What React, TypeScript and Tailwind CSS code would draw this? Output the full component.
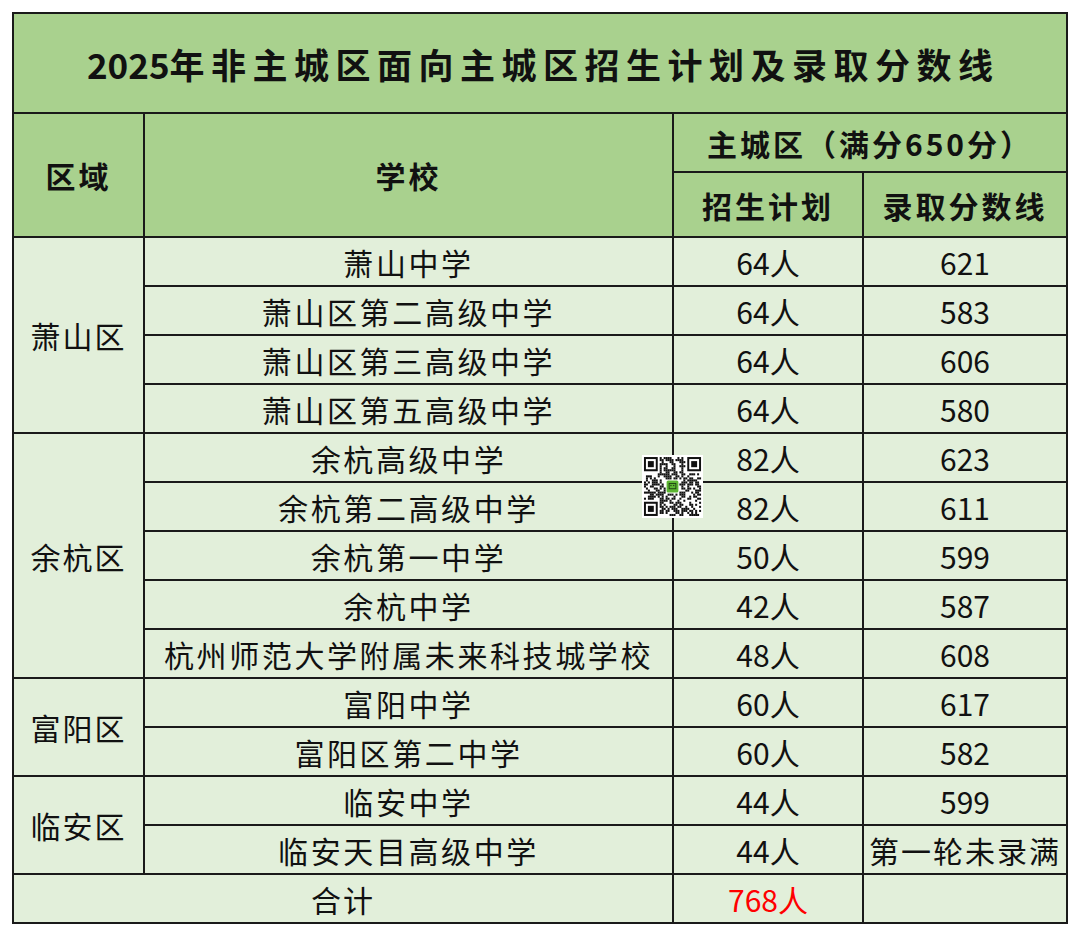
import React from 'react';

const FONT = { fontFamily: '"Noto Sans CJK SC", "Noto Sans", sans-serif' };

interface Row {
  school: string;
  plan: string;
  score: string;
}

const groups: { area: string; rows: Row[] }[] = [
  {
    area: '萧山区',
    rows: [
      { school: '萧山中学', plan: '64人', score: '621' },
      { school: '萧山区第二高级中学', plan: '64人', score: '583' },
      { school: '萧山区第三高级中学', plan: '64人', score: '606' },
      { school: '萧山区第五高级中学', plan: '64人', score: '580' },
    ],
  },
  {
    area: '余杭区',
    rows: [
      { school: '余杭高级中学', plan: '82人', score: '623' },
      { school: '余杭第二高级中学', plan: '82人', score: '611' },
      { school: '余杭第一中学', plan: '50人', score: '599' },
      { school: '余杭中学', plan: '42人', score: '587' },
      { school: '杭州师范大学附属未来科技城学校', plan: '48人', score: '608' },
    ],
  },
  {
    area: '富阳区',
    rows: [
      { school: '富阳中学', plan: '60人', score: '617' },
      { school: '富阳区第二中学', plan: '60人', score: '582' },
    ],
  },
  {
    area: '临安区',
    rows: [
      { school: '临安中学', plan: '44人', score: '599' },
      { school: '临安天目高级中学', plan: '44人', score: '第一轮未录满' },
    ],
  },
];

const rowSpan: Record<number, string> = {
  2: 'row-span-2',
  4: 'row-span-4',
  5: 'row-span-5',
};

// fake qr code, just a fixed pseudo random pattern
function QrCode() {
  const n = 29;
  const cells: React.ReactNode[] = [];
  let seed = 11;
  const rand = () => {
    seed = (seed * 9301 + 49297) % 233280;
    return seed / 233280;
  };
  const inFinder = (x: number, y: number) =>
    (x < 8 && y < 8) || (x >= n - 8 && y < 8) || (x < 8 && y >= n - 8);
  for (let y = 0; y < n; y++) {
    for (let x = 0; x < n; x++) {
      const v = rand();
      if (inFinder(x, y)) continue;
      if (x >= 11 && x <= 17 && y >= 11 && y <= 17) continue;
      if (v > 0.48) cells.push(<rect key={`${x}-${y}`} x={x} y={y} width={1.02} height={1.02} fill="#111" />);
    }
  }
  const finder = (fx: number, fy: number) => (
    <g key={`f${fx}${fy}`}>
      <rect x={fx} y={fy} width={7} height={7} fill="#111" />
      <rect x={fx + 1} y={fy + 1} width={5} height={5} fill="#fff" />
      <rect x={fx + 2} y={fy + 2} width={3} height={3} fill="#111" />
    </g>
  );
  return (
    <svg width="61" height="63" viewBox="-1 -1 31 31" preserveAspectRatio="none" className="block">
      <rect x={-1} y={-1} width={31} height={31} fill="#fff" />
      {cells}
      {finder(0, 0)}
      {finder(n - 7, 0)}
      {finder(0, n - 7)}
      <rect x={11.5} y={11.5} width={6} height={6} rx={0.8} fill="#5cb531" />
      <rect x={12.8} y={13} width={3.4} height={2.6} fill="none" stroke="#1d3d12" strokeWidth={0.45} />
      <rect x={13.4} y={13.7} width={0.6} height={0.6} fill="#1d3d12" />
      <rect x={14.8} y={13.7} width={0.6} height={0.6} fill="#1d3d12" />
    </svg>
  );
}

export default function App() {
  const head = 'bg-[#a9d18e] flex items-center justify-center font-bold text-[30px] text-[#111] tracking-[3px]';
  const body = 'bg-[#e2efda] flex items-center justify-center text-[30px] text-[#111]';

  return (
    <div className="w-[1080px] h-[936px] bg-white relative" style={FONT}>
      <div className="absolute left-[12px] top-[12px]">
        <div className="grid grid-cols-[129px_527px_188px_202px] grid-rows-[98px_57px_63px_repeat(14,47px)] gap-[2px] p-[2px] bg-[#1a1a1a] leading-none">
          <div className="col-span-4 bg-[#a9d18e] flex items-center justify-center font-bold text-[35px] text-[#111]">
            <span>2025</span>
            <span className="tracking-[6.5px] mr-[-6.5px]">年非主城区面向主城区招生计划及录取分数线</span>
          </div>
          <div className={`${head} row-span-2`}>区域</div>
          <div className={`${head} row-span-2`}>学校</div>
          <div className="col-span-2 bg-[#a9d18e] flex items-center justify-center font-bold text-[30px] text-[#111] tracking-[3px]">
            主城区（满分650分）
          </div>
          <div className={head}>招生计划</div>
          <div className={head}>录取分数线</div>

          {groups.map((g) => (
            <React.Fragment key={g.area}>
              <div className={`${body} ${rowSpan[g.rows.length]} tracking-[2px]`} style={{ gridColumn: 1 }}>
                {g.area}
              </div>
              {g.rows.map((r) => (
                <React.Fragment key={r.school}>
                  <div className={`${body} tracking-[2.6px]`} style={{ gridColumn: 2 }}>{r.school}</div>
                  <div className={body}>{r.plan}</div>
                  <div className={`${body} ${r.score.length > 3 ? 'tracking-[2px]' : ''}`}>{r.score}</div>
                </React.Fragment>
              ))}
            </React.Fragment>
          ))}

          <div className={`${body} col-span-2 tracking-[2px]`}>合计</div>
          <div className={`${body} text-[#ff0000]`}>768人</div>
          <div className={body}></div>
        </div>
        <div className="absolute left-[630px] top-[443px]">
          <QrCode />
        </div>
      </div>
    </div>
  );
}
